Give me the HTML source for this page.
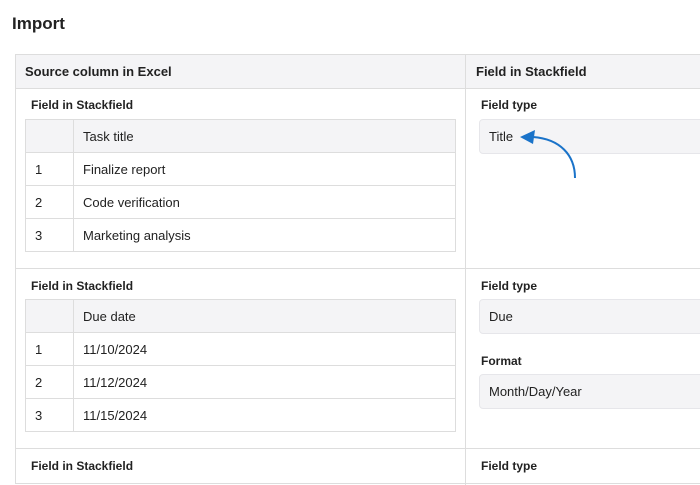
<!DOCTYPE html>
<html><head><style>
body{margin:0;width:700px;height:474px;overflow:hidden;background:#fff;font-family:"Liberation Sans",sans-serif;color:#222;position:relative}
.a{position:absolute}
h1{position:absolute;left:12px;top:14px;margin:0;font-size:17px;font-weight:bold}
.lbl{position:absolute;font-size:12px;font-weight:bold}
.box{position:absolute;left:479px;width:240px;height:35px;background:#f4f4f6;border:1px solid #e6e6ea;border-radius:4px;box-sizing:border-box;font-size:13px;line-height:33px;padding-left:9px}
table{position:absolute;left:25px;width:431px;border-collapse:collapse;font-size:13px}
td{border:1px solid #ddd;height:32px;padding:0 0 0 9px}
td:first-child{width:38px}
tr:first-child td{background:#f4f4f6}
</style></head><body>
<h1>Import</h1>
<div class="a" style="left:15px;top:54px;width:700px;height:430px;border:1px solid #ddd;box-sizing:border-box"></div>
<div class="a" style="left:16px;top:55px;width:700px;height:33px;background:#f4f4f6;border-bottom:1px solid #ddd"></div>
<div class="a" style="left:465px;top:55px;width:1px;height:430px;background:#ddd"></div>
<div class="a" style="left:16px;top:268px;width:700px;height:1px;background:#ddd"></div>
<div class="a" style="left:16px;top:448px;width:700px;height:1px;background:#ddd"></div>
<div class="lbl" style="left:25px;top:64px;font-size:13px">Source column in Excel</div>
<div class="lbl" style="left:476px;top:64px;font-size:13px">Field in Stackfield</div>

<div class="lbl" style="left:31px;top:98px">Field in Stackfield</div>
<table style="top:119px"><tr><td></td><td>Task title</td></tr><tr><td>1</td><td>Finalize report</td></tr><tr><td>2</td><td>Code verification</td></tr><tr><td>3</td><td>Marketing analysis</td></tr></table>
<div class="lbl" style="left:481px;top:98px">Field type</div>
<div class="box" style="top:119px">Title</div>
<svg class="a" style="left:515px;top:125px" width="70" height="60"><path d="M60 53 C60 30 45 14 18 12" fill="none" stroke="#1a73c9" stroke-width="2"/><path d="M5 12 L20 5 L18 19 Z" fill="#1a73c9"/></svg>

<div class="lbl" style="left:31px;top:279px">Field in Stackfield</div>
<table style="top:299px"><tr><td></td><td>Due date</td></tr><tr><td>1</td><td>11/10/2024</td></tr><tr><td>2</td><td>11/12/2024</td></tr><tr><td>3</td><td>11/15/2024</td></tr></table>
<div class="lbl" style="left:481px;top:279px">Field type</div>
<div class="box" style="top:299px">Due</div>
<div class="lbl" style="left:481px;top:354px">Format</div>
<div class="box" style="top:374px">Month/Day/Year</div>

<div class="lbl" style="left:31px;top:459px">Field in Stackfield</div>
<div class="lbl" style="left:481px;top:459px">Field type</div>
</body></html>
